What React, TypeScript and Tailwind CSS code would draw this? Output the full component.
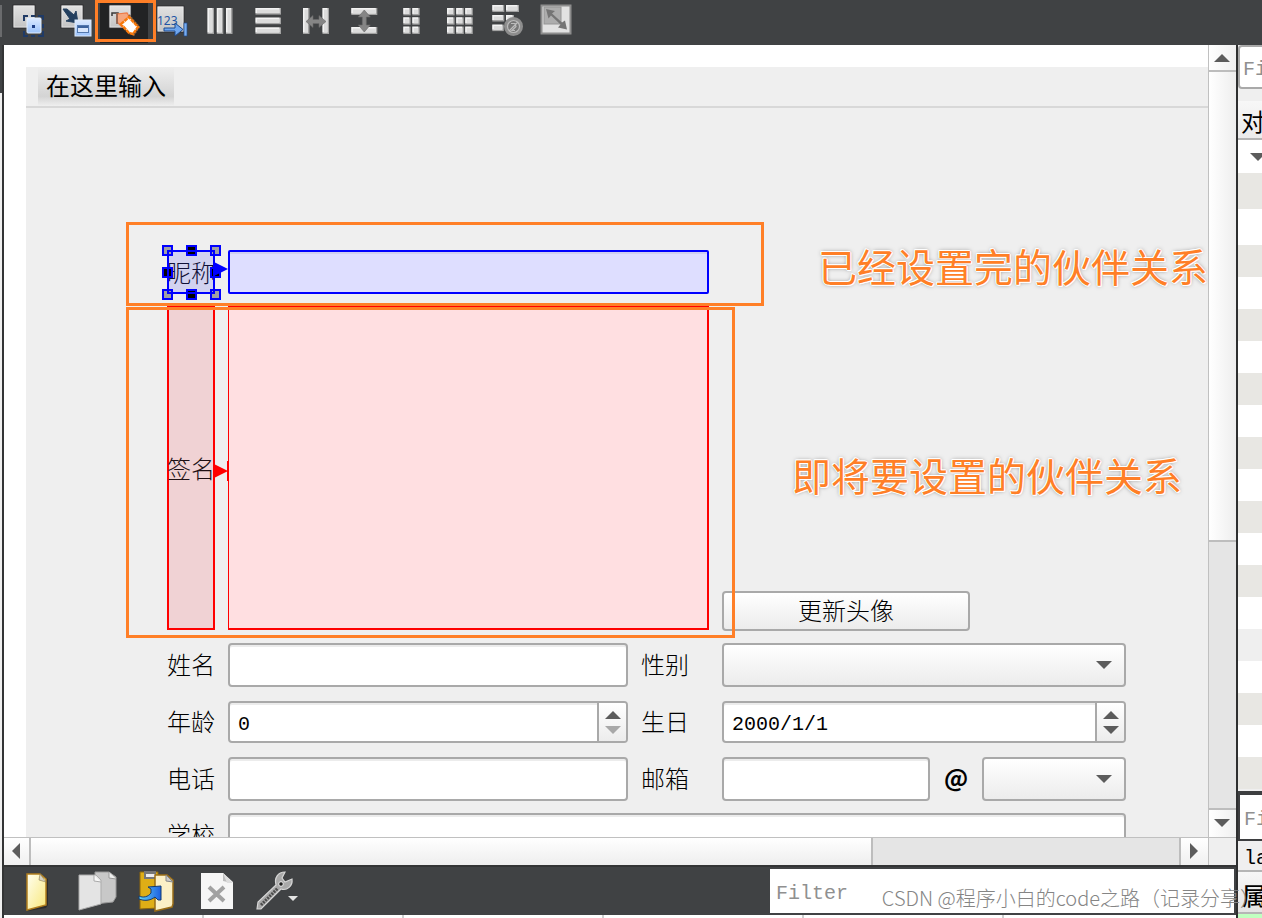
import React from "react";

const LABEL_FONT = "font-['Noto_Sans_CJK_SC',sans-serif] font-light text-2xl";
const MONO = "font-['Liberation_Mono','Noto_Sans_CJK_SC',monospace] text-xl";
const BOX = "rounded-[4px] border-2 border-[#a9a9a9]";
const FIELD =
  "h-11 min-w-0 rounded-[4px] border-2 border-[#a9a9a9] bg-white px-2 text-black shadow-[inset_0_2px_0_#ececec] outline-none";

function Plate({ x = 9, y = 5, w = 22, h = 23 }: { x?: number; y?: number; w?: number; h?: number }) {
  return (
    <g>
      <rect x={x} y={y} width={w} height={h} fill="url(#plate)" stroke="#2c2d2f" />
      <rect x={x + 1} y={y + 1} width={w - 2} height={h - 2} fill="none" stroke="#f2f2f2" opacity=".6" />
    </g>
  );
}

function Bar({ x, y, w, h }: { x: number; y: number; w: number; h: number }) {
  return (
    <g>
      <rect x={x} y={y} width={w} height={h} fill="#a2a2a2" />
      <rect x={x} y={y} width={w - 1.5} height={h - 1.5} fill="#f3f3f3" />
      <rect x={x + 1.5} y={y + 1.5} width={w - 3} height={h - 3} fill="#dcdcdc" />
    </g>
  );
}

const TOOLS: { name: string; art: React.ReactNode }[] = [
  {
    name: "编辑控件",
    art: (
      <g>
        <Plate />
        <path d="M20 21v-5h4M34 16h5v4M39 31v5h-5M24 36h-4v-5M27 16h4M39 24v4M27 36h4" fill="none" stroke="#1f3a66" strokeWidth="2" />
        <rect x="23" y="18" width="14" height="15" rx="1" fill="url(#sky)" stroke="#e3eefc" />
        <rect x="28" y="25" width="3" height="3" fill="#1d3f86" />
      </g>
    ),
  },
  {
    name: "编辑信号/槽",
    art: (
      <g>
        <Plate />
        <path d="M11 9l4 0 7 6 2-4 2 12-12-2 4-2z" fill="#24405f" stroke="#24405f" />
        <rect x="23" y="20" width="16" height="16" fill="url(#sky)" stroke="#dce9fb" />
        <rect x="25.500" y="25.500" width="11" height="7" fill="#d7e5fb" stroke="#5378ae" />
        <path d="M26 27h10" stroke="#3b629d" strokeWidth="2" />
      </g>
    ),
  },
  {
    name: "编辑伙伴",
    art: (
      <g>
        <Plate />
        <path d="M12 16v-3h6v3" fill="none" stroke="#3a3a3a" strokeWidth="1.500" />
        <path d="M17 14l10-1 3 5-8 9-5-5z" fill="#f5a67e" stroke="#ee7a45" strokeWidth="1.200" />
        <path d="M17 14v10" stroke="#7d5a4c" strokeWidth="1.500" />
        <path d="M29 15l10 12-6 9" fill="none" stroke="#7a5a40" strokeWidth="2" strokeDasharray="2 1" />
        <path d="M21 24l8-7 9 10-5 7-4-1z" fill="#fff" stroke="#f8790a" strokeWidth="2.500" strokeDasharray="4 .6" />
      </g>
    ),
  },
  {
    name: "编辑 Tab 顺序",
    art: (
      <g>
        <Plate y={6} w={27} h={26} />
        <text x="9" y="25" fontFamily="Noto Sans" fontSize="12" fill="#1f55a4">
          123
        </text>
        <path d="M16 28h11v-5l8 6.500-8 6.500v-5h-11z" fill="#6fa6ee" stroke="#1f4b8e" />
        <rect x="36" y="23" width="3" height="13" fill="#78adf0" stroke="#1f4b8e" strokeWidth=".7" />
      </g>
    ),
  },
  { name: "水平布局", art: [11.5, 20.8, 30].map((x) => <Bar key={x} x={x} y={8} w={6.5} h={26} />) },
  { name: "垂直布局", art: [8, 17.6, 27.4].map((y) => <Bar key={y} x={11.5} y={y} w={25.5} h={6.6} />) },
  {
    name: "水平分裂器",
    art: (
      <g>
        <Bar x={11} y={8} w={6.5} h={26} />
        <Bar x={30.5} y={8} w={6.5} h={26} />
        <path d="M14 21.500l7-6v4h6v-4l7 6-7 6v-4h-6v4z" fill="#858585" stroke="#6a6a6a" strokeWidth=".6" />
      </g>
    ),
  },
  {
    name: "垂直分裂器",
    art: (
      <g>
        <Bar x={11.3} y={8} w={26} h={7} />
        <Bar x={11.3} y={27} w={26} h={7} />
        <path d="M24.300 10l6 7h-4v8h4l-6 7-6-7h4v-8h-4z" fill="#858585" stroke="#6a6a6a" strokeWidth=".6" />
      </g>
    ),
  },
  {
    name: "窗体布局",
    art: [8, 17.3, 26.6].map((y) => (
      <g key={y}>
        <Bar x={15.3} y={y} w={7.4} h={7.4} />
        <Bar x={24.3} y={y} w={7.4} h={7.4} />
      </g>
    )),
  },
  {
    name: "栅格布局",
    art: [8, 17.3, 26.6].map((y) => (
      <g key={y}>
        <Bar x={11} y={y} w={7.6} h={7.4} />
        <Bar x={20.2} y={y} w={7.6} h={7.4} />
        <Bar x={29.2} y={y} w={7.6} h={7.4} />
      </g>
    )),
  },
  {
    name: "打破布局",
    art: (
      <g>
        <Bar x={8.3} y={5} w={12} h={7} />
        <Bar x={22} y={5} w={13} h={7} />
        <Bar x={8.3} y={15} w={12} h={6.5} />
        <Bar x={22} y={15} w={8} h={6.5} />
        <Bar x={8.3} y={24.6} w={11.5} h={6.5} />
        <circle cx="29.500" cy="26.500" r="8" fill="#777" stroke="#8e8e8e" strokeWidth="3" />
        <circle cx="29.500" cy="26.500" r="6" fill="none" stroke="#bcbcbc" strokeWidth="1.200" />
        <path d="M25 31l9-9M27 23.500h4l1 3-4 4h3" fill="none" stroke="#bcbcbc" strokeWidth="1.200" />
      </g>
    ),
  },
  {
    name: "调整大小",
    art: (
      <g>
        <rect x="9.500" y="5.500" width="29" height="28" fill="#e2e2e2" stroke="#8d8d8d" strokeWidth="2" />
        <rect x="12" y="7" width="17" height="17" fill="#adadad" stroke="#949494" />
        <path d="M14 9l9 2-3 2.500 10 9 3-2 2 9-9-2 2.500-3-9.500-9-2.500 3z" fill="#757575" />
      </g>
    ),
  },
];

const ACTIONS: { name: string; art: React.ReactNode }[] = [
  {
    name: "新建",
    art: (
      <g>
        <path d="M20 7h13l8 5v26l-2 3-18 3z" fill="#2c2c2c" />
        <path d="M20 7h13l6 5v26l-19 5z" fill="url(#cream)" stroke="#b07d1d" strokeWidth="1.500" />
        <path d="M33 7l-1 6 7 2z" fill="#d8d4c2" stroke="#8c7a4a" strokeWidth=".6" />
      </g>
    ),
  },
  {
    name: "复制",
    art: (
      <g>
        <path d="M28 5h14l7 5v20l-3 5-18 2z" fill="#c8c8c8" stroke="#989898" />
        <path d="M42 5v6l7 1" fill="#eee" stroke="#999" />
        <path d="M12 8h17l5 5v24l-22 6z" fill="#e4e4e4" stroke="#ababab" />
        <path d="M27 8v6l7 1" fill="#f8f8f8" stroke="#aaa" />
      </g>
    ),
  },
  {
    name: "粘贴",
    art: (
      <g>
        <path d="M13 5h18v36l-18 1z" fill="#dfae16" stroke="#8e670d" />
        <path d="M17 4h12v8h-12z" fill="#777" />
        <path d="M19 7h9v3h-9z" fill="#eee" />
        <path d="M28 8h12l6 5v24l-1 3-17 4z" fill="#fbf0c7" stroke="#9a6d17" strokeWidth="1.500" />
        <path d="M39 8v6l7 1z" fill="#ccc" stroke="#888" />
        <path d="M12 29c4 2 9 1 12-3v-4l-3-2 13-1v14h-3l-3-3c-5 4-11 4-16 2z" fill="url(#azure)" stroke="#133a70" />
      </g>
    ),
  },
  {
    name: "删除",
    art: (
      <g>
        <path d="M14 6h22l10 9v27h-32z" fill="#f6f6f6" />
        <path d="M36 6v8l9 2z" fill="#bdbdbd" />
        <path d="M36 6l10 10h-6z" fill="#dedede" />
        <path d="M22 20l15 14M37 20l-15 14" stroke="#a2a2a2" strokeWidth="4" />
      </g>
    ),
  },
  {
    name: "设置",
    art: (
      <g>
        <path
          d="M10 42l1-7 18-17c-2-7 2-13 9-13l-3 6 3 4 7-3c1 7-5 12-11 10l-20 20z"
          fill="#a9a9a9"
          stroke="#d6d6d6"
          strokeWidth="1.200"
        />
        <path d="M14 38l17-17" stroke="#4c4c4c" strokeWidth="3" strokeDasharray="2 1" />
        <circle cx="34" cy="17" r="2.300" fill="#222" stroke="#eee" />
        <path d="M41 29h10l-5 5z" fill="#e4e4e4" />
      </g>
    ),
  },
];

function Defs() {
  return (
    <svg className="absolute size-0" aria-hidden="true">
      <defs>
        <linearGradient id="plate" x1="0" y1="0" x2="0" y2="1">
          <stop offset="0" stopColor="#e2e2e2" />
          <stop offset="1" stopColor="#c3c3c3" />
        </linearGradient>
        <linearGradient id="sky" x1="0" y1="0" x2="0" y2="1">
          <stop offset="0" stopColor="#dceaff" />
          <stop offset="1" stopColor="#9cc3fb" />
        </linearGradient>
        <linearGradient id="cream" x1="0" y1="0" x2="1" y2="1">
          <stop offset="0" stopColor="#fffef0" />
          <stop offset="1" stopColor="#f8e87a" />
        </linearGradient>
        <linearGradient id="azure" x1="0" y1="0" x2="1" y2="0">
          <stop offset="0" stopColor="#63d5f8" />
          <stop offset="1" stopColor="#1c5fe0" />
        </linearGradient>
      </defs>
    </svg>
  );
}

function Arrow({ dir, className = "fill-[#5c5c5c]" }: { dir: "up" | "down" | "left" | "right"; className?: string }) {
  const d = { up: "M0 8L8 0l8 8z", down: "M0 0h16L8 8z", left: "M8 0v16L0 8z", right: "M0 0l8 8-8 8z" }[dir];
  const flat = dir === "up" || dir === "down";
  return (
    <svg width={flat ? 16 : 8} height={flat ? 8 : 16} className={className} aria-hidden="true">
      <path d={d} />
    </svg>
  );
}

function Combo({ id, label, className }: { id: string; label: string; className: string }) {
  return (
    <div className={`relative h-11 ${className}`}>
      <select
        id={id}
        aria-label={label}
        className={`${BOX} size-full appearance-none bg-linear-to-b from-white to-[#ececec]`}
      />
      <span className="pointer-events-none absolute inset-y-0 right-3.5 flex items-center">
        <Arrow dir="down" />
      </span>
    </div>
  );
}

function Spin({ id, value, className, atMin }: { id: string; value: string; className: string; atMin?: boolean }) {
  return (
    <div className={`${BOX} flex h-[42px] overflow-hidden bg-white shadow-[inset_0_2px_0_#ececec] ${className}`}>
      <input id={id} defaultValue={value} className={`${MONO} min-w-0 flex-1 bg-transparent px-2 pt-1.5 text-black outline-none`} />
      <div className="flex w-[29px] flex-col border-l-2 border-[#a9a9a9] bg-linear-to-b from-white to-[#ececec]">
        <button type="button" aria-label="增加" className="flex flex-1 items-center justify-center pt-1">
          <Arrow dir="up" />
        </button>
        <button type="button" aria-label="减少" className="flex flex-1 items-center justify-center pb-1">
          <Arrow dir="down" className={atMin ? "fill-[#a8a8a8]" : "fill-[#5c5c5c]"} />
        </button>
      </div>
    </div>
  );
}

function Label({ htmlFor, children }: { htmlFor: string; children: string }) {
  return (
    <label htmlFor={htmlFor} className={`${LABEL_FONT} shrink-0 pb-0.5 leading-9 whitespace-nowrap text-black`}>
      {children}
    </label>
  );
}

const HANDLES = [
  [0, 0, "#a0a0a4"], [24, 0, "#000"], [48, 0, "#a0a0a4"],
  [0, 22, "#000"], [48, 22, "#000"],
  [0, 44, "#a0a0a4"], [24, 44, "#000"], [48, 44, "#a0a0a4"],
] as const;

function Form() {
  return (
    <form className="relative mt-[22px] ml-[22px] bg-[#efefef]">
      <nav className="flex h-[41px] border-b-2 border-[#d8d8d8] pl-3">
        <button
          type="button"
          className="h-[39px] bg-linear-to-b from-[#efefef] via-[#d4d4d4] via-75% to-[#efefef] px-2 pb-1 font-['Noto_Sans_CJK_SC',sans-serif] text-2xl leading-none text-black"
        >
          在这里输入
        </button>
      </nav>

      <div className="flex flex-col gap-3 pt-[142px] pr-[82px] pl-[141px]">
        <div className="flex h-11 gap-[13px]">
          <label
            htmlFor="nick"
            className={`${LABEL_FONT} relative flex w-12 shrink-0 items-center justify-center border-2 border-[#0000ff] bg-[#d2d2f0] whitespace-nowrap text-[#101038]`}
          >
            昵称
            <svg className="absolute -top-[7px] -left-[7px]" width="70" height="58" aria-hidden="true">
              {HANDLES.map(([x, y, fill]) => (
                <rect key={`${x}-${y}`} x={x + 1} y={y + 1} width="9" height="9" fill={fill} stroke="#0000ff" strokeWidth="2" />
              ))}
              <path d="M6 6h46v42h-46z" fill="none" stroke="#0000ff" strokeWidth="2" />
              <path d="M52 17l14 7-14 7z" fill="#0000ff" />
            </svg>
          </label>
          <input
            id="nick"
            className="h-11 w-[481px] rounded-[2px] border-2 border-[#0000ff] bg-[#dedeff] px-2 text-xl shadow-[inset_0_2px_0_#cfcff0] outline-none"
          />
        </div>

        <div className="flex h-[325px] gap-[13px]">
          <label
            htmlFor="sign"
            className={`${LABEL_FONT} relative mb-px flex w-12 shrink-0 items-center justify-center border-2 border-[#ff0000] bg-[#f0d2d4] whitespace-nowrap text-[#201014]`}
          >
            签名
            <svg className="absolute top-[153px] left-[45px]" width="16" height="20" aria-hidden="true">
              <path d="M0 3l14 7-14 7zM13 0h2v20h-2z" fill="#ff0000" />
            </svg>
          </label>
          <textarea
            id="sign"
            className="mb-px w-[481px] resize-none border-2 border-l border-[#ff0000] bg-[#ffdfe1] p-2 text-xl outline-none"
          />
          <button
            type="button"
            className={`${BOX} h-10 w-[248px] self-end bg-linear-to-b from-white to-[#ececec] pb-0.5 font-['Noto_Sans_CJK_SC',sans-serif] text-2xl leading-none font-light text-black`}
          >
            更新头像
          </button>
        </div>

        <div className="grid grid-cols-[48px_400px_68px_minmax(0,1fr)] items-center gap-x-[13px] gap-y-3">
          <Label htmlFor="name">姓名</Label>
          <input id="name" className={`${FIELD} ${MONO}`} />
          <Label htmlFor="sex">性别</Label>
          <Combo id="sex" label="性别" className="w-full" />

          <Label htmlFor="age">年龄</Label>
          <div className="flex h-[46px] items-center">
            <Spin id="age" value="0" atMin className="w-full" />
          </div>
          <Label htmlFor="birth">生日</Label>
          <Spin id="birth" value="2000/1/1" className="w-full" />

          <Label htmlFor="phone">电话</Label>
          <input id="phone" className={`${FIELD} ${MONO}`} />
          <Label htmlFor="mail">邮箱</Label>
          <div className="flex items-center">
            <input id="mail" className={`${FIELD} ${MONO} flex-1`} />
            <span className="w-[52px] pb-1 text-center font-['Noto_Sans_CJK_SC',sans-serif] text-2xl font-bold text-black">@</span>
            <Combo id="host" label="邮箱域名" className="w-36" />
          </div>

          <Label htmlFor="school">学校</Label>
          <input id="school" className={`${FIELD} ${MONO} col-span-3`} />
        </div>
      </div>

      <div className="pointer-events-none absolute top-[155px] left-[100px] h-[84px] w-[638px] border-3 border-[#ff7f27]" />
      <div className="pointer-events-none absolute top-[240px] left-[100px] h-[331px] w-[609px] border-3 border-[#ff7f27]" />
      <Note className="absolute top-[170px] left-[792px]">已经设置完的伙伴关系</Note>
      <Note className="absolute top-[379px] left-[766px]">即将要设置的伙伴关系</Note>
    </form>
  );
}

function Note({ className, children }: { className: string; children: string }) {
  return (
    <p
      className={`${className} font-['Noto_Sans_CJK_SC',sans-serif] text-[39px] leading-[56px] whitespace-nowrap text-[#ff7f27] [text-shadow:1px_0_#fff,-1px_0_#fff,0_1px_#fff,0_-1px_#fff,1px_1px_#fff,-1px_-1px_#fff,0_0_4px_#777]`}
    >
      {children}
    </p>
  );
}

function VerticalScroll() {
  return (
    <div className="flex w-7 shrink-0 flex-col border-l border-[#c0c0c0] bg-[#e5e5e5]">
      <button aria-label="向上滚动" className="flex h-[27px] items-center justify-center border-b-2 border-[#bdbdbd] bg-linear-to-r from-white to-[#f0f0f0] pr-0.5">
        <Arrow dir="up" />
      </button>
      <div className="h-[470px] border-b-2 border-[#bdbdbd] bg-linear-to-r from-white to-[#eeeeee]" />
      <div className="flex-1" />
      <button aria-label="向下滚动" className="flex h-[29px] items-center justify-center border-t-2 border-[#bdbdbd] bg-linear-to-r from-white to-[#f0f0f0] pr-0.5 pb-0.5">
        <Arrow dir="down" />
      </button>
    </div>
  );
}

function HorizontalScroll() {
  return (
    <div className="flex h-7 shrink-0 border-t border-[#c0c0c0] bg-[#e5e5e5]">
      <button aria-label="向左滚动" className="flex w-[27px] items-center justify-center border-r-2 border-[#bdbdbd] bg-linear-to-b from-white to-[#f0f0f0] pr-0.5 pb-0.5">
        <Arrow dir="left" />
      </button>
      <div className="w-[842px] border-r-2 border-[#bdbdbd] bg-linear-to-b from-white to-[#eeeeee]" />
      <div className="flex-1" />
      <button aria-label="向右滚动" className="flex w-[29px] items-center justify-center border-l-2 border-[#bdbdbd] bg-linear-to-b from-white to-[#f0f0f0] pr-0.5 pb-0.5">
        <Arrow dir="right" />
      </button>
      <div className="w-7 border-l border-[#c0c0c0] bg-[#efefef]" />
    </div>
  );
}

const ROWS = [
  "h-9 bg-[#e8e7e3]", "h-9 bg-white", "h-8 bg-[#e8e7e3]", "h-8 bg-white", "h-8 bg-[#e8e7e3]", "h-8 bg-white",
  "h-8 bg-[#e8e7e3]", "h-8 bg-white", "h-8 bg-[#e8e7e3]", "h-8 bg-white", "h-8 bg-[#e8e7e3]", "h-8 bg-white",
  "h-8 bg-[#e8e7e3]", "h-8 bg-white", "h-8 bg-[#efefef]", "h-8 bg-white", "h-8 bg-[#e8e7e3]", "h-8 bg-white",
  "h-8 bg-[#e8e7e3]",
];

function Dock() {
  return (
    <aside className="flex w-[26px] shrink-0 flex-col overflow-hidden border-l-2 border-[#2e2f30] bg-[#efefef] text-black">
      <input
        aria-label="对象过滤"
        placeholder="Filter"
        className={`${BOX} ${MONO} h-11 w-60 shrink-0 bg-white pt-1 pl-[3px] placeholder:text-[#909090]`}
      />
      <h2 className="mt-3 h-[39px] shrink-0 border-b-2 border-[#b5b5b5] bg-linear-to-b from-[#f7f7f7] to-[#ebebeb] pl-[3px] font-['Noto_Sans_CJK_SC',sans-serif] text-2xl leading-10 whitespace-nowrap">
        对
      </h2>
      <div className="flex h-[33px] w-60 shrink-0 items-center bg-white pl-3">
        <Arrow dir="down" />
      </div>
      {ROWS.map((row, i) => (
        <div key={i} className={`shrink-0 ${row}`} />
      ))}
      <div className="mt-0.5 shrink-0 border-t-4 border-b-2 border-l-2 border-[#3d3e40] bg-white">
        <input
          aria-label="属性过滤"
          placeholder="Filter"
          className={`${MONO} h-11 w-60 bg-white pt-1 pl-1 placeholder:text-[#909090]`}
        />
      </div>
      <p className={`${MONO} h-[31px] shrink-0 border-b-2 border-[#b5b5b5] pl-1.5 leading-9`}>la</p>
      <h2 className="h-[42px] shrink-0 border-b-2 border-[#b5b5b5] bg-linear-to-b from-[#f7f7f7] to-[#e4e4e4] pl-1 font-['Noto_Sans_CJK_SC',sans-serif] text-2xl leading-[46px] font-medium whitespace-nowrap">
        属
      </h2>
      <div className="h-4 shrink-0 bg-[#c0ffc0]" />
    </aside>
  );
}

export default function App() {
  return (
    <div className="relative flex h-screen flex-col overflow-hidden bg-[#404244]">
      <Defs />
      <header className="flex h-[45px] shrink-0 items-start">
        <div className="mt-[5px] mr-0.5 h-8 w-0.5 bg-[#6a6b6d]" />
        {TOOLS.map((tool, i) => (
          <button key={tool.name} aria-label={tool.name} className={`relative h-[43px] w-12 ${i === 2 ? "bg-[#222324]" : ""}`}>
            <svg width="48" height="43" viewBox="0 0 48 43" aria-hidden="true">
              {tool.art}
            </svg>
            {i === 2 && <span className="absolute top-0 -left-[5px] z-10 h-[42px] w-[61px] border-3 border-[#ff7f27]" />}
          </button>
        ))}
      </header>

      <div className="flex min-h-0 flex-1">
        <div className="w-1 shrink-0 border-r-2 border-[#333435] bg-[#efefef]">
          <div className="h-12 bg-[#404244]" />
        </div>
        <main className="flex min-w-0 flex-1 flex-col">
          <div className="flex min-h-0 flex-1 bg-white">
            <div className="min-w-0 flex-1 overflow-hidden">
              <Form />
            </div>
            <VerticalScroll />
          </div>
          <HorizontalScroll />
          <div className="flex h-[50px] shrink-0 items-center justify-between border-t-2 border-[#333435] bg-[#404244] pr-0.5 pl-[3px]">
            <div className="flex">
              {ACTIONS.map((action) => (
                <button key={action.name} aria-label={action.name} className="h-12 w-[60px]">
                  <svg width="60" height="48" viewBox="0 0 60 48" aria-hidden="true">
                    {action.art}
                  </svg>
                </button>
              ))}
            </div>
            <input
              aria-label="动作过滤"
              placeholder="Filter"
              className={`${MONO} h-11 w-[464px] bg-white px-1.5 pt-1 outline-none placeholder:text-[#909090]`}
            />
          </div>
          <div className="flex h-[3px] shrink-0 bg-white">
            {[0, 1, 2, 3, 4].map((n) => (
              <div key={n} className="w-[200px] border-r-2 border-[#d0d0d0]" />
            ))}
          </div>
        </main>
        <Dock />
      </div>

      <p className="pointer-events-none absolute right-0.5 bottom-1 font-['Noto_Sans_CJK_SC',sans-serif] text-xl leading-8 font-light whitespace-nowrap text-[#858585]">
        CSDN @程序小白的code之路（记录分享）
      </p>
    </div>
  );
}
